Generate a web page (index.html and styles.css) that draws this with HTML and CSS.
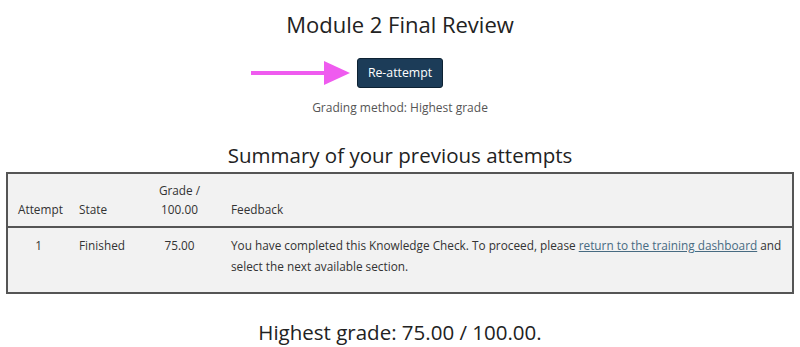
FILE: index.html
```html
<!DOCTYPE html>
<html>
<head>
<meta charset="utf-8">
<link rel="stylesheet" href="styles.css">
</head>
<body>
<div class="page">
  <h2 class="title">Module 2 Final Review</h2>
  <div class="actions">
    <div class="btn-wrap">
      <svg class="arrow" width="100" height="26" viewBox="0 0 100 26">
        <rect x="0" y="11" width="76" height="4" fill="#ef5bef"/>
        <polygon points="73,1 99,13 73,25" fill="#ef5bef"/>
      </svg>
      <button class="btn">Re-attempt</button>
    </div>
  </div>
  <p class="method">Grading method: Highest grade</p>
  <h3 class="summary">Summary of your previous attempts</h3>
  <table class="attempts">
    <thead>
      <tr>
        <th class="c-attempt">Attempt</th>
        <th class="c-state">State</th>
        <th class="c-grade">Grade /<br>100.00</th>
        <th class="c-feedback">Feedback</th>
      </tr>
    </thead>
    <tbody>
      <tr>
        <td class="c-attempt center">1</td>
        <td class="c-state">Finished</td>
        <td class="c-grade center">75.00</td>
        <td class="c-feedback">You have completed this Knowledge Check. To proceed, please <a href="#">return to the training dashboard</a> and select the next available section.</td>
      </tr>
    </tbody>
  </table>
  <h3 class="result">Highest grade: 75.00 / 100.00.</h3>
</div>
</body>
</html>
```
FILE: styles.css
```css
html, body {
  margin: 0;
  padding: 0;
  background: #fff;
}
body {
  font-family: "Open Sans", "DejaVu Sans", sans-serif;
  color: #333;
}
.page {
  padding: 0 6px;
}
.title {
  margin: 0;
  padding-top: 8px;
  font-size: 22px;
  font-weight: 400;
  line-height: 32px;
  text-align: center;
  color: #222;
}
.actions {
  display: flex;
  justify-content: center;
  margin-top: 18px;
}
.btn-wrap {
  position: relative;
  display: flex;
}
.arrow {
  position: absolute;
  left: -106px;
  top: 2px;
}
.btn {
  font-family: "Open Sans", "DejaVu Sans", sans-serif;
  font-size: 12.3px;
  color: #fff;
  background: #1c3c58;
  border: 1px solid #0d2233;
  border-radius: 3px;
  width: 86px;
  height: 30px;
  padding: 0;
  line-height: 28px;
  text-align: center;
}
.method {
  margin: 10px 0 0;
  text-align: center;
  font-size: 12px;
  line-height: 20px;
  color: #555;
}
.summary {
  margin: 23px 0 0;
  font-size: 20.5px;
  font-weight: 400;
  line-height: 28px;
  text-align: center;
  color: #222;
}
.attempts {
  width: 100%;
  margin-top: 3px;
  table-layout: fixed;
  border-collapse: collapse;
  border: 2px solid #555;
  background: #f2f2f2;
  font-size: 11.8px;
  line-height: 19px;
  color: #333;
}
.attempts th {
  font-weight: 400;
  text-align: left;
  vertical-align: bottom;
  padding: 7px 10px 7px;
  border-bottom: 2px solid #555;
}
.attempts th.c-grade {
  text-align: center;
}
.attempts td {
  vertical-align: top;
  padding: 7px 10px 15px;
  line-height: 21px;
}
.c-attempt { width: 41px; }
.c-state { width: 49px; }
.c-grade { width: 63px; }
.attempts td.c-feedback { padding-right: 6px; }
.center { text-align: center; }
.attempts a {
  color: #486b82;
  text-decoration: underline;
}
.result {
  margin: 24px 0 0;
  font-size: 20.5px;
  font-weight: 400;
  line-height: 28px;
  text-align: center;
  color: #222;
}
```
